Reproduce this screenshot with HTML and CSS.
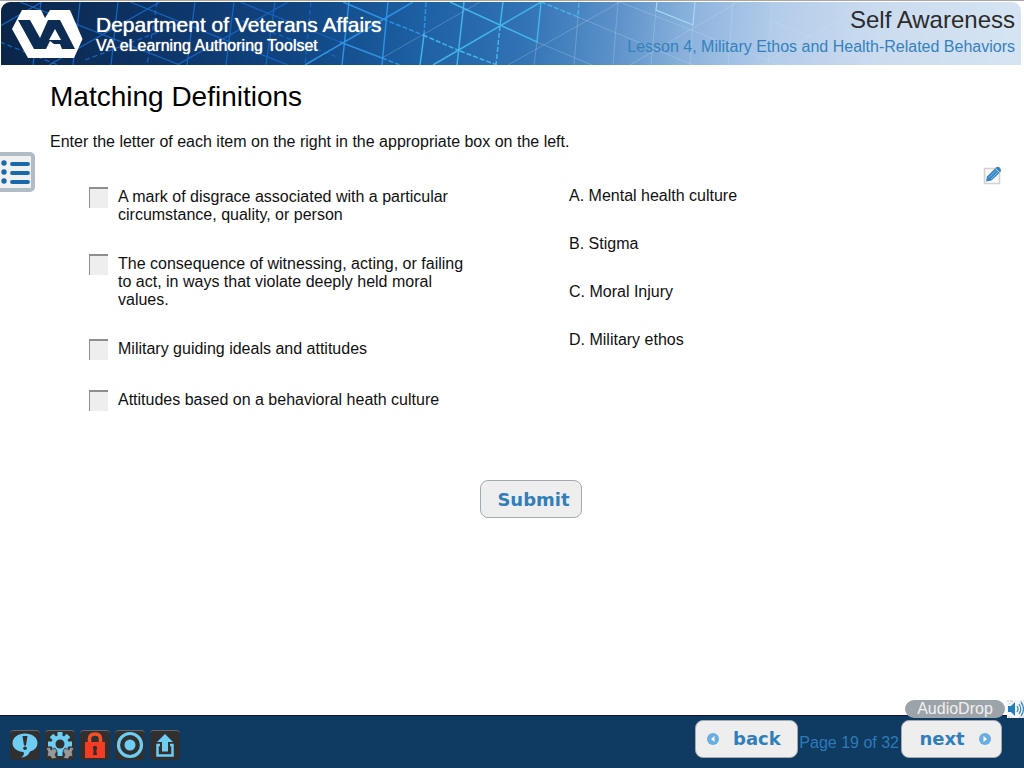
FILE: index.html
```html
<!DOCTYPE html>
<html lang="en">
<head>
<meta charset="utf-8">
<meta name="viewport" content="width=device-width, initial-scale=1">
<title>Self Awareness - Matching Definitions</title>
<link rel="stylesheet" href="styles.css">
</head>
<body>
<header class="banner">
  <svg class="banner-lines" viewBox="1 2 1020 63" preserveAspectRatio="xMinYMin slice" aria-hidden="true" fill="none">
    <g stroke="#1763bd" stroke-width="1.3">
      <path d="M41 2 33 65M80 2 73 65M118 2 111 65M195 2 187 65M234 2 226 65M275 2 266 65M49 65 160 2M177 65 288 2M0 26 42 2M20 2 180 65M130 2 288 65M240 2 340 42"/>
      <path d="M157 2 147 65M311 2 305 65M0 42 58 65M85 60 190 20M234 18 340 58" stroke-dasharray="5 3"/>
    </g>
    <g stroke="#2d91e2" stroke-width="1.5">
      <path d="M349 2 342 65M388 2 382 65M305 65 413 2M340 42 382 58M343 2 383 19"/>
      <path d="M383 19 423 35M382 58 400 65M426 2 424 35" stroke-dasharray="5 2"/>
    </g>
    <g stroke="#42b4ea" stroke-width="1.5">
      <path d="M424 35 420 65M464 2 457 65M433 65 541 2M450 2 537 42 541 2M503 2 500 26"/>
      <path d="M423 35 460 51M500 26 496 65M460 51 497 65M541 2 578 17 579 2" stroke-dasharray="5 2"/>
    </g>
    <path d="M657 2 656 10 693 25 695 2" stroke="#a3dcf2" stroke-width="1.2"/>
    <g stroke="#d5e8f8" stroke-opacity=".25">
      <path d="M382 58 480 2M508 65 620 2M537 42 534 65M578 17 574 65M618 2 613 65M656 10 651 65M693 25 690 65M733 2 728 65M772 2 768 65M578 17 693 65M537 42 592 65M620 2 780 65M630 65 738 2M760 65 870 2M770 20 880 65"/>
    </g>
  </svg>
  <div class="brand">
    <svg class="va-logo" viewBox="12 9 71 50" role="img" aria-label="VA">
      <path fill="#fff" d="M22 10H41L45 18 50 10H70L82.500 39 74 58H28L12 29Z"/>
      <path fill="#0c2c54" d="M18 20H30L40 38 48 20H60L75 49H62L60 44H54L50 41 46 49H34Z"/>
      <path fill="#fff" d="M55 29 49 40H61Z"/>
    </svg>
    <div class="brand-text">
      <div class="brand-name">Department of Veterans Affairs</div>
      <div class="brand-sub">VA eLearning Authoring Toolset</div>
    </div>
  </div>
  <div class="course">
    <div class="course-title">Self Awareness</div>
    <div class="course-lesson">Lesson 4, Military Ethos and Health-Related Behaviors</div>
  </div>
</header>

<button class="menu-tab" type="button" aria-label="Table of contents">
  <svg viewBox="0 0 35 40" aria-hidden="true"><g fill="#1868ac"><circle cx="4" cy="11" r="2.7"/><circle cx="4" cy="20" r="2.7"/><circle cx="4" cy="29" r="2.7"/></g><path d="M12 12H28M12 21H28M12 30H28" stroke="#1868ac" stroke-width="3.8" stroke-linecap="round"/></svg>
</button>

<main class="page">
  <h1 class="page-title">Matching Definitions</h1>
  <p class="instructions">Enter the letter of each item on the right in the appropriate box on the left.</p>
  <form class="quiz" id="quiz">
    <div class="definitions">
      <div class="definition"><input class="answer" id="a1" type="text" maxlength="1"><label for="a1">A mark of disgrace associated with a particular circumstance, quality, or person</label></div>
      <div class="definition"><input class="answer" id="a2" type="text" maxlength="1"><label for="a2">The consequence of witnessing, acting, or failing to act, in ways that violate deeply held moral values.</label></div>
      <div class="definition"><input class="answer" id="a3" type="text" maxlength="1"><label for="a3">Military guiding ideals and attitudes</label></div>
      <div class="definition"><input class="answer" id="a4" type="text" maxlength="1"><label for="a4">Attitudes based on a behavioral heath culture</label></div>
    </div>
    <div class="terms">
      <div>A. Mental health culture</div>
      <div>B. Stigma</div>
      <div>C. Moral Injury</div>
      <div>D. Military ethos</div>
    </div>
    <button class="edit" type="button" aria-label="Edit">
      <svg viewBox="0 0 19 19" aria-hidden="true"><path d="M1.500 2.500H16.500V17.500H1.500Z" fill="#fafafa" stroke="#d2d2d2" stroke-width="1.600"/><path d="M3 15.500 4 10.500 13 1.500Q15 0 17 2 18.800 4 17.500 6L8.500 14.500Z" fill="#3485c2"/><path d="M6 11.500 13 4.500M8 13 15 6" stroke="#9bcdf0" stroke-width=".8"/><path d="M12.500 2.500 16.800 6.800" stroke="#e4f1fa" stroke-width=".8"/></svg>
    </button>
  </form>
  <button class="btn submit" type="submit" form="quiz">Submit</button>
</main>

<footer class="footer">
  <div class="tools">
    <button class="tool" type="button" aria-label="Feedback"><svg viewBox="0 0 30 30" aria-hidden="true"><path fill="#6dcdf3" d="M15 3.500C8 3.500 2.500 7.500 2.500 13S8 21.500 13.500 22Q15 25 11 27.500 18 27 20 21.500 27.500 19.500 27.500 13C27.500 7.500 22 3.500 15 3.500Z"/><path fill="#303030" d="M12.500 6H17.500L16 15.500H14Z"/><circle cx="15" cy="18.200" r="1.800" fill="#303030"/></svg></button>
    <button class="tool" type="button" aria-label="Settings"><svg viewBox="0 0 30 30" aria-hidden="true"><g stroke="#6dcdf3" stroke-width="5"><path d="M15 2V26M3 14H27M6.500 5.500 23.500 22.500M23.500 5.500 6.500 22.500"/></g><circle cx="15" cy="14" r="8.500" fill="#6dcdf3"/><circle cx="15" cy="14" r="4.500" fill="#303030"/><g fill="#96999b" stroke="#303030" stroke-width=".8"><path d="M1 18 5 17 6 20 10 18 12 21 10 25 12 28 7 29 5 26 2 27 3 22Z"/><path d="M29 18 25 17 24 20 20 18 18 21 20 25 18 28 23 29 25 26 28 27 27 22Z"/></g></svg></button>
    <button class="tool" type="button" aria-label="Lock"><svg viewBox="0 0 30 30" aria-hidden="true"><path d="M9.500 14V9Q9.500 4 15 4T20.500 9V14" fill="none" stroke="#f45027" stroke-width="3.500"/><path fill="#f43b24" d="M5 12H25V28H5Z"/><circle cx="15" cy="18" r="2.200" fill="#303030"/><path fill="#303030" d="M14 18H16L17 25H13Z"/></svg></button>
    <button class="tool" type="button" aria-label="Target"><svg viewBox="0 0 30 30" aria-hidden="true"><circle cx="15" cy="15" r="11.500" fill="none" stroke="#6dcdf3" stroke-width="3.200"/><circle cx="15" cy="15" r="5.500" fill="#6dcdf3"/></svg></button>
    <button class="tool" type="button" aria-label="Exit"><svg viewBox="0 0 30 30" aria-hidden="true"><path fill="#6dcdf3" d="M15 4 23 12H18V21.500H12V12H7Z"/><path d="M10 15H7.500V25.500H22.500V15H20" fill="none" stroke="#6dcdf3" stroke-width="2.500"/></svg></button>
  </div>
  <nav class="pager" aria-label="Pages">
    <button class="btn back" type="button"><svg class="arrow" viewBox="0 0 12 12" aria-hidden="true"><circle cx="6" cy="6" r="6" fill="#68aee0"/><path d="M7.500 3 4 6 7.500 9Z" fill="#fff"/></svg>back</button>
    <span class="page-count">Page 19 of 32</span>
    <button class="btn next" type="button">next<svg class="arrow" viewBox="0 0 12 12" aria-hidden="true"><circle cx="6" cy="6" r="6" fill="#68aee0"/><path d="M4.500 3 8 6 4.500 9Z" fill="#fff"/></svg></button>
  </nav>
  <div class="audio">
    <button class="audio-drop" type="button">AudioDrop</button>
    <svg class="speaker" viewBox="0 0 17 18" aria-hidden="true"><path d="M0 0H17V18H0Z" fill="#f4f6f8"/><path d="M1 6H4L8 2V16L4 12H1Z" fill="#237ebd"/><path d="M10 6Q12 9 10 12M12 4Q15.500 9 12 14M14 2Q19 9 14 16" fill="none" stroke="#3a8bc5" stroke-width="1.300"/><path d="M0 1H6L2 4M1 17H5M13 1H17M12 17H17" fill="none" stroke="#c8c8c8" stroke-width="1" stroke-dasharray="2 1"/></svg>
  </div>
</footer>
</body>
</html>
```
FILE: styles.css
```css
* { box-sizing: border-box; }

body {
  position: relative;
  display: flex;
  flex-direction: column;
  min-height: 100vh;
  margin: 0;
  background: #fff;
  color: #111;
  font: 16px/18px "Liberation Sans", Arial, sans-serif;
}

button { margin: 0; padding: 0; font: inherit; cursor: pointer; }
svg { display: block; }

.banner {
  position: relative;
  display: flex;
  justify-content: space-between;
  height: 65px;
  margin-right: 3px;
  padding: 2px 6px 0 12px;
  background: #fff;
}
.banner::before {
  content: "";
  position: absolute;
  inset: 0 -3px auto 0;
  height: 1px;
  background: #aaa5aa;
}
.banner-lines {
  position: absolute;
  inset: 2px 0 0 1px;
  width: calc(100% - 1px);
  height: 63px;
  border-radius: 9px 9px 0 0;
  background: linear-gradient(95deg, #0b2548 0%, #0d3568 16%, #114784 30%, #1d60a3 41%, #3072b4 51%, #5b91c9 60%, #8fb5de 68%, #b4cdea 76%, #cbdcef 86%, #d6e4f2 100%);
}
.brand, .course { position: relative; }
.brand { display: flex; gap: 13px; }
.va-logo { width: 71px; height: 50px; margin-top: 7px; }
.brand-text { padding-top: 11px; color: #fff; text-shadow: 0 0 1px #fff; white-space: nowrap; }
.brand-name { font-size: 21px; line-height: 24px; }
.brand-sub { font-size: 16px; line-height: 17px; }
.course { padding-top: 4px; text-align: right; }
.course-title { color: #2b2b2b; font-size: 24px; line-height: 28px; }
.course-lesson { padding-top: 3px; color: #3581bd; font-size: 16px; line-height: 20px; }

.menu-tab {
  position: absolute;
  top: 152px;
  left: 0;
  width: 35px;
  height: 40px;
  border: 4px solid #b0bdc7;
  border-left: 0;
  border-radius: 0 5px 5px 0;
  background: #f0f0f0;
}
.menu-tab svg { width: 35px; height: 40px; margin-top: -4px; }

.page { flex: 1; display: flex; flex-direction: column; padding: 16px 13px 0 50px; }
.page-title { margin: 0; color: #000; font-size: 28px; font-weight: 400; line-height: 32px; }
.instructions { margin: 20px 0 0; }
.quiz {
  display: grid;
  grid-template-columns: 376px 1fr 19px;
  column-gap: 104px;
  margin-top: 36px;
  padding: 0 9px 0 39px;
}
.definitions { display: grid; row-gap: 30px; align-content: start; }
.definition { display: flex; align-items: flex-start; gap: 10px; }
.definition label { padding-top: 1px; }
.answer {
  flex: none;
  width: 19px;
  height: 21px;
  margin: 0;
  padding: 0;
  border: 0 solid #8f8f8f;
  border-width: 2px 0 0 1px;
  border-radius: 0;
  background: #eee;
  font: inherit;
  text-align: center;
}
.terms { display: grid; row-gap: 30px; align-content: start; }
.edit { align-self: start; width: 19px; height: 19px; margin-top: -21px; border: 0; background: none; }

.btn {
  display: flex;
  align-items: center;
  justify-content: center;
  height: 38px;
  border: 1px solid #a4abb0;
  border-radius: 8px;
  background: #eee;
  color: #327ebb;
  font: bold 18px/22px "DejaVu Sans", Verdana, sans-serif;
}
.submit { align-self: center; width: 102px; margin: 69px 0 30px; padding: 2px 0 0 6px; }

.footer {
  position: relative;
  display: flex;
  align-items: flex-start;
  justify-content: space-between;
  min-height: 53px;
  padding: 4px 22px 8px 10px;
  border-top: 1px solid #101044;
  background: #0f3a62;
}
.tools { display: flex; gap: 5px; padding-top: 10px; }
.tool {
  width: 30px;
  height: 30px;
  border: 0;
  border-top: 1px solid #666;
  border-radius: 4px;
  background: #303030;
}
.tool svg { width: 30px; height: 30px; margin-top: -1px; }
.pager { display: flex; gap: 1px; }
.arrow { width: 12px; height: 12px; }
.back { gap: 14px; width: 103px; padding-right: 6px; }
.next { gap: 14px; width: 101px; margin-left: 1px; padding-left: 7px; }
.page-count { padding-top: 14px; color: #2d7ab8; }
.audio { position: absolute; top: -16px; right: 0; display: flex; gap: 2px; }
.audio-drop {
  width: 100px;
  height: 18px;
  border: 0;
  border-radius: 9px;
  background: #9ca4a9;
  color: #f1f1f1;
  line-height: 18px;
}
.speaker { width: 17px; height: 18px; }
```
